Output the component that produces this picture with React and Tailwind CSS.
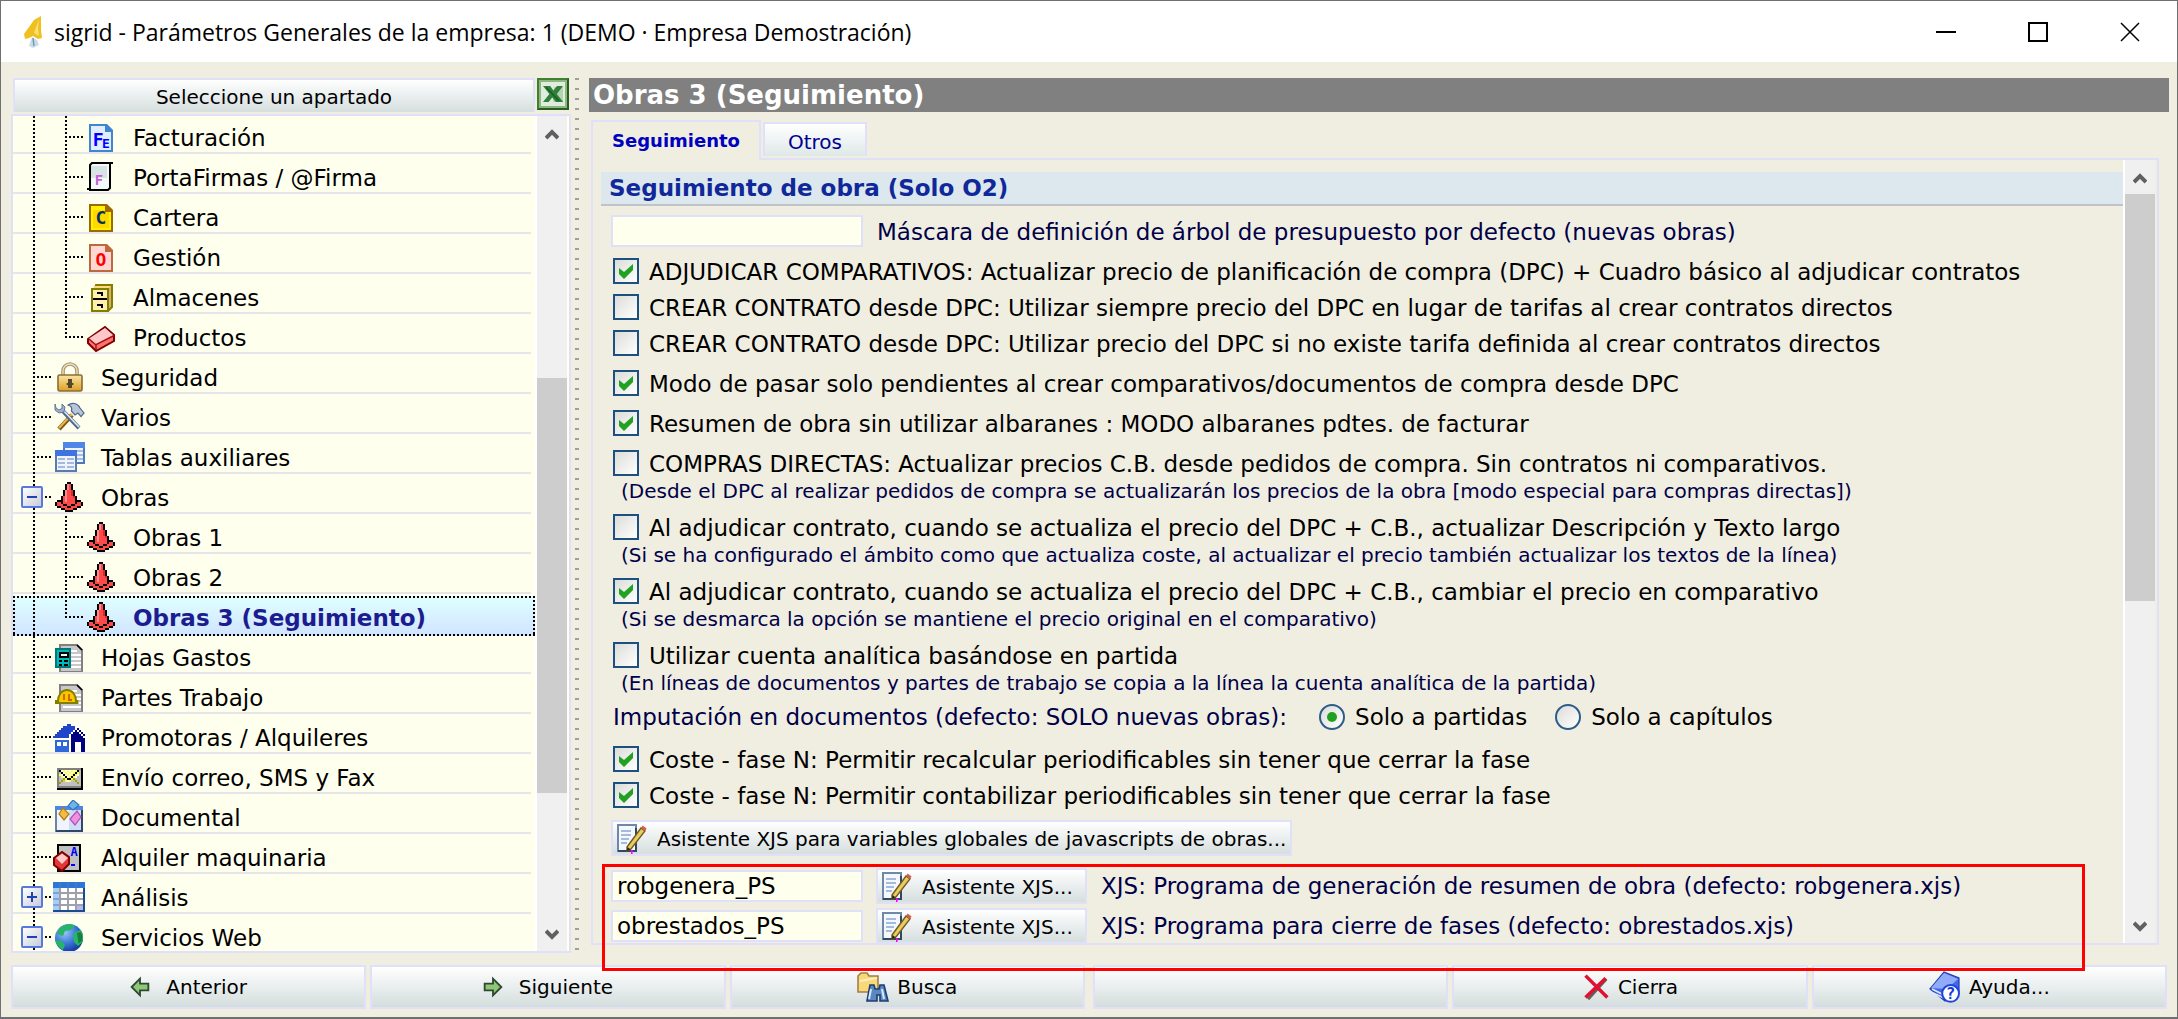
import { useState } from "react";

// Draws a small bitmap icon: one character per pixel, "." is transparent
function PixelIcon({ rows, colors }) {
  return (
    <svg viewBox="0 0 16 16" className="size-8 shrink-0" shapeRendering="crispEdges">
      {rows.map((row, y) =>
        row.split("").map((c, x) =>
          colors[c] ? (
            <rect key={`${x}-${y}`} x={x} y={y} width="1" height="1" fill={colors[c]} />
          ) : null
        )
      )}
    </svg>
  );
}

function Icon({ children, className = "size-8" }) {
  return (
    <svg viewBox="0 0 16 16" className={`shrink-0 ${className}`}>
      {children}
    </svg>
  );
}

const letter = { fontFamily: "DejaVu Sans Mono", fontWeight: 700, textAnchor: "middle" };

function DocIcon({ stroke, fill, inner, children }) {
  return (
    <Icon>
      <path d="M2.5 2.5h8l3 3v10h-11z" fill={fill} stroke={stroke} />
      <path d="M4 5h8v9H4z" fill={inner} />
      <path d="M10 2h1l3 3v1h-4z" fill={stroke} />
      {children}
    </Icon>
  );
}

function FacturacionIcon() {
  return (
    <DocIcon stroke="#3f86cf" fill="#e0ecff" inner="#e0ecff">
      <text x="6.6" y="13" fontSize="9" fill="#0000ff" style={letter}>F</text>
      <text x="10.4" y="14" fontSize="6.5" fill="#0000ff" style={letter}>E</text>
    </DocIcon>
  );
}

function FirmaIcon() {
  return (
    <Icon>
      <path d="M2.5 2.500l1-1h9v12.500l-1 1h-9z" fill="#f4fafa" stroke="#000" />
      <path d="M3 3h8v6H3z" fill="#d8e4e4" />
      <path d="M12 1h2v1h-2zM1 14h2v1H1z" fill="#000" />
      <text x="7" y="12.6" fontSize="7" fill="#c65fd8" style={letter}>F</text>
    </Icon>
  );
}

function CarteraIcon() {
  return (
    <DocIcon stroke="#a06800" fill="#fff200" inner="#ffd800">
      <text x="8" y="12.2" fontSize="9" fill="#003060" style={letter}>C</text>
    </DocIcon>
  );
}

function GestionIcon() {
  return (
    <DocIcon stroke="#bc6a3c" fill="#ffd8d4" inner="#ffd8d4">
      <text x="8" y="13" fontSize="9" fill="#ff0000" style={letter}>O</text>
    </DocIcon>
  );
}

function AlmacenesIcon() {
  return (
    <Icon>
      <path d="M5.5 2.5h8v11l-2 2V4.500H5z" fill="#d8b070" stroke="#808000" />
      <path d="M5 3h8l-1 1H4z" fill="#ffd880" />
      <path d="M3.500 4.500h8v11h-8z" fill="#fff0b0" stroke="#808000" />
      <path d="M4 9h7v1H4zM6 6h3v2H8V7H6zM6 12h3v2H8v-1H6z" fill="#000" />
    </Icon>
  );
}

function ProductosIcon() {
  return (
    <Icon>
      <path d="M1.500 9.500L10 3.500l4.500 4v3L5.500 15.500l-4-4z" fill="#ff7070" stroke="#800000" />
      <path d="M2 9.300L10 4l4 3.500-8.500 4.500z" fill="#ffc8c8" />
      <path d="M2 9.500l3.500 3v2.500M5.500 12.300l9-4.500" fill="none" stroke="#a01010" strokeWidth=".7" />
    </Icon>
  );
}

function SeguridadIcon() {
  return (
    <Icon>
      <defs>
        <linearGradient id="lock" x1="0" y1="0" x2="0" y2="1">
          <stop offset="0" stopColor="#fbe6a4" />
          <stop offset="1" stopColor="#dba024" />
        </linearGradient>
      </defs>
      <path d="M5 8V5.500a3.500 3.500 0 0 1 7 0V8" fill="none" stroke="#a89468" strokeWidth="1.800" />
      <path d="M5 8V5.500a3.500 3.500 0 0 1 7 0V8" fill="none" stroke="#ece0c4" strokeWidth=".7" />
      <rect x="2.500" y="7.500" width="12" height="8" rx=".8" fill="url(#lock)" stroke="#8c6c34" strokeWidth=".8" />
      <path d="M7.500 9.500h2v2h.7v1h-.7v1.500h-2v-1.500h-.700v-1h.7z" fill="#54482c" />
    </Icon>
  );
}

function VariosIcon() {
  return (
    <Icon>
      <path d="M9.500 7.500L3 14.500" stroke="#7a5820" strokeWidth="2.200" />
      <path d="M9.500 7L3 14" stroke="#f0b840" strokeWidth="1" />
      <path d="M4 4.500l9 9.500" stroke="#50688c" strokeWidth="2" />
      <path d="M4.500 4.500l8.500 9" stroke="#dce4f0" strokeWidth=".9" />
      <path d="M1 2v3l2 1.500 2.500-.5.500-2.500L4.500 2v2.200L3 5 1.500 4z" fill="#a0b0c8" stroke="#60789c" strokeWidth=".5" />
      <path d="M7.500 2.500c2-1.500 5-1 6 1.500l2 2.500-1.500 1.800-1.500-1.800-1.500 1-1.800-2c.5-1.500-.200-2.500-1.700-3z" fill="#b8c4d8" stroke="#50688c" strokeWidth=".6" />
    </Icon>
  );
}

function TablasIcon() {
  return (
    <Icon>
      <rect x="5.500" y="1.500" width="10" height="10" fill="#eef4ff" stroke="#5078c0" />
      <rect x="5" y="1" width="11" height="3" fill="#4f86e8" />
      <path d="M12 5.500h3M12 7.500h3M12 9.500h3" stroke="#a8bce0" />
      <rect x="1.500" y="5.500" width="10" height="10" fill="#eef4ff" stroke="#5a7cac" />
      <rect x="1" y="5" width="11" height="3" fill="#3f74e0" />
      <path d="M2.500 9.500h3.500M7 9.500h3.500M2.500 11.500h3.500M7 11.500h3.500M2.500 13.500h3.500M7 13.500h3.500" stroke="#a8b8d8" />
    </Icon>
  );
}

function ConoIcon() {
  return (
    <PixelIcon
      colors={{ K: "#000", R: "#ff4848", P: "#ff8c8c", D: "#e02828" }}
      rows={[
        "................",
        ".......KK.......",
        "......KPRK......",
        "......KPRK......",
        "......KPRK......",
        ".....KPRRDK.....",
        ".....KPRRDK.....",
        ".....KPRRDK.....",
        "....KRPRRRDK....",
        "....KRPRRRRK....",
        "..KKKRPRRRRKKK..",
        ".KRRKRRRRRRKRRK.",
        ".KRRRKKRRKKRRRK.",
        "..KKRRRKKRRRKK..",
        "....KKRRRRKK....",
        "......KKKK......",
      ]}
    />
  );
}

function PageBase() {
  return (
    <>
      <path d="M3.500 2.500h8.500l2.500 2.500v11h-11z" fill="#c8c8c8" stroke="#808080" />
      <path d="M12 2.500l2.500 2.500" fill="none" stroke="#000" strokeWidth=".8" />
      <path d="M5 5.500h7M5 7.500h9M5 9.500h9M5 11.500h9M5 13.500h9" stroke="#fff" />
    </>
  );
}

function HojasIcon() {
  return (
    <Icon>
      <PageBase />
      <rect x="1.500" y="4.500" width="7" height="9" fill="#00b8b8" stroke="#007878" />
      <rect x="3.500" y="6.500" width="4" height="2" fill="#e0ffff" stroke="#000" />
      <path d="M3 10h1.500v1H3zM5.500 10h2v1h-2zM3 12h1.500v1H3zM5.500 12h2v1h-2z" fill="#000" />
    </Icon>
  );
}

function PartesIcon() {
  return (
    <Icon>
      <PageBase />
      <path d="M1.500 11.500v-1h1c0-3 1.800-5.500 4.500-5.500s4.500 2.500 4.500 5.500h.7v1z" fill="#ffc400" stroke="#808000" />
      <path d="M5.500 7v3M8 7v3h1.500" fill="none" stroke="#c06800" strokeWidth=".9" />
    </Icon>
  );
}

function CasaIcon() {
  return (
    <PixelIcon
      colors={{ B: "#1f46c8", N: "#000080", C: "#2f66dc", W: "#fff" }}
      rows={[
        "................",
        "................",
        ".......BB.......",
        ".....BBBBBB.....",
        "....BBBBBBBWN...",
        "...BBBBBBBWNWN..",
        "..BBBBBBBWNNNWN.",
        ".BBBBBBBWNNNNNWN",
        "BBBBBBBB.NNNNNN.",
        ".........NNNNNNN",
        ".CCCCCCC.NNNNNNN",
        ".CWWCWWC.NNWWWNN",
        ".CWWCWWC.NNWWWNN",
        ".CCCCCCC.NNWWWNN",
        ".CCCCCCC.NNWWWNN",
        ".CCCCCCC.NNWWWNN",
      ]}
    />
  );
}

function CorreoIcon() {
  return (
    <PixelIcon
      colors={{ G: "#808080", K: "#000", W: "#fff", Y: "#ffff40", S: "#c0c0c0", O: "#a0a000" }}
      rows={[
        "................",
        "................",
        "................",
        "................",
        "..GGGGGGGGGGGGK.",
        "..GKWYWYWYWYKSK.",
        "..GSKWYWYWYKYSK.",
        "..GYWKWYWYKYWSK.",
        "..GSYWKWYKYWSSK.",
        "..GSSOYKKYOSSSK.",
        "..GSOSYWYSSOSSK.",
        "..GOSSSSSSSSOSK.",
        "..GSSSSSSSSSSSK.",
        "..GGGGGGGGGGGGK.",
        "..KKKKKKKKKKKKK.",
      ]}
    />
  );
}

function DocumentalIcon() {
  return (
    <Icon>
      <rect x="1.500" y="3.500" width="13" height="12" fill="#f0f4ff" stroke="#6c84a8" />
      <rect x="1" y="3" width="14" height="2" fill="#4f86e0" />
      <path d="M8 5h6v10H8z" fill="#cfdcf8" />
      <path d="M1.500 15.500h13V5" fill="none" stroke="#304868" />
      <path d="M10 0l3 2.500L10 5 7.500 3z" fill="#70b4e8" stroke="#3878b8" strokeWidth=".6" />
      <path d="M5 4l3 3-2.500 3L3 7z" fill="#f4bc40" stroke="#b07c18" strokeWidth=".6" />
      <path d="M12 5.500l2 3-3 4-2.500-3z" fill="#f090e0" stroke="#b050b0" strokeWidth=".6" />
    </Icon>
  );
}

function AlquilerIcon() {
  return (
    <Icon>
      <rect x="2.500" y="2.500" width="11" height="13" fill="#c0c0c0" stroke="#000" />
      <text x="10.5" y="8" fontSize="6" fill="#0000ff" style={letter}>A</text>
      <path d="M9 12h2v1H9z" fill="#0000ff" />
      <path d="M.500 9L4.500 6l3.500 2.500v3.500L4.500 15.500l-4-3z" fill="#e03838" stroke="#800000" />
      <path d="M1.500 9L4.500 6.800l3 2.200-3 3z" fill="#ffc8c8" />
    </Icon>
  );
}

function AnalisisIcon() {
  return (
    <Icon>
      <rect x=".5" y="1.500" width="15" height="14" fill="#a0a0a8" stroke="#1c4c90" />
      <rect x="0" y="1" width="16" height="3" fill="#2f74d8" />
      <rect x="0" y="4" width="3" height="11" fill="#a8ccf8" />
      <path d="M4 4h3v2H4zM8 4h3v2H8zM12 4h3v2h-3zM4 7h3v2H4zM8 7h3v2H8zM12 7h3v2h-3zM4 10h3v2H4zM8 10h3v2H8zM12 10h3v2h-3zM4 13h3v2H4zM8 13h3v2H8z" fill="#fff" />
      <path d="M12 13h3v2h-3z" fill="#b8b8f0" />
      <path d="M0 6.500h3M0 9.500h3M0 12.500h3M3.500 1v3M7.500 1v3M11.500 1v3" stroke="#4f7cb8" strokeWidth=".6" />
    </Icon>
  );
}

function WebIcon() {
  return (
    <Icon>
      <defs>
        <radialGradient id="globe" cx=".35" cy=".3" r=".8">
          <stop offset="0" stopColor="#9cc8f4" />
          <stop offset=".5" stopColor="#3c78d8" />
          <stop offset="1" stopColor="#0c2c90" />
        </radialGradient>
      </defs>
      <circle cx="8" cy="9" r="7" fill="url(#globe)" />
      <path d="M3 4.500C5 2 9 1.500 11 3L9 5 6 5.500 5 8 2 7zM1.200 10l3.300.5 1.500 2-1 2.500C3 14 1.500 12 1.200 10zM11 6l3-1c1 2 1.300 4 .8 6L12.500 13 10.500 11l-.5-3z" fill="#28b468" />
      <path d="M12 6.500l2-.5c.6 1.500.8 3 .5 4.500l-1.700 1.200z" fill="#188038" />
    </Icon>
  );
}

function ExcelIcon() {
  return (
    <Icon>
      <rect width="16" height="16" fill="#3f7f30" />
      <path d="M16 0v16H0z" fill="#285c20" />
      <rect x="1.500" y="1.500" width="13" height="13" fill="#e0ece0" stroke="#8cb880" />
      <path d="M8.500 4.500H13v7.500H8z" fill="#b4d4b0" />
      <path d="M3 4h3.600l1.600 2.200L10 4h3L9.900 8l3.200 4H9.400L7.600 9.800 5.800 12H3l3.200-4z" fill="#2f8038" />
      <path d="M4.500 4.600l6.500 6.800" stroke="#1c5c28" strokeWidth=".8" />
    </Icon>
  );
}

function NotaIcon() {
  return (
    <Icon>
      <rect x="1.500" y="1.500" width="9" height="13" fill="#f4f8fc" stroke="#7088a8" />
      <path d="M10.500 3v11.500H1.500" fill="none" stroke="#304868" />
      <path d="M3 4.500h5M3 6.500h5M3 8.500h4M3 10.500h3" stroke="#88a8d0" strokeWidth=".8" />
      <path d="M6 12.500L13 3l2 1.500-7 9-2 1z" fill="#e8cc60" stroke="#705820" strokeWidth=".7" />
      <path d="M13 3l.8-1.200 2 1.500L15 4.500z" fill="#d06050" />
      <path d="M5.800 14.500l.5-2 1.500 1.200z" fill="#302810" />
      <path d="M8 14h.8v2H8z" fill="#ff00ff" />
    </Icon>
  );
}

function FlechaIcon({ right }) {
  return (
    <svg viewBox="0 0 12 12" className={`mr-2 h-6 w-5 shrink-0 ${right ? "rotate-180" : ""}`}>
      <path d="M1 6l5-5v3h5v4H6v3z" fill="#8cc878" stroke="#304830" strokeWidth="1.100" />
    </svg>
  );
}

function BuscaIcon() {
  return (
    <Icon>
      <path d="M.500 2.500L2 1h3l1 1.500h4.500v8h-10z" fill="#f8d878" stroke="#a08048" strokeWidth=".8" />
      <path d="M1.500 5L10 3.500" stroke="#fff0c0" />
      <path d="M6.500 7h2l.5 2h2l.5-2h2l2 8h-4v-3h-1.500v3H5z" fill="#5c88c0" stroke="#1c3c74" strokeWidth=".8" />
      <path d="M7 9l-1 5M12.500 9l1 5" stroke="#d8e8fc" />
    </Icon>
  );
}

function CierraIcon() {
  return (
    <Icon className="size-7">
      <path d="M3.500 15L14 3.500" stroke="#606060" strokeWidth="1.500" />
      <path d="M2 1.500L14.500 14M2 14L13.500 3" stroke="#e01030" strokeWidth="2" />
    </Icon>
  );
}

function AyudaIcon() {
  return (
    <Icon>
      <path d="M.500 9L7.500.500l7.500 3v7L8 15z" fill="#4468e8" stroke="#2040b0" strokeWidth=".6" />
      <path d="M1 8.500L7.500 1l7 3L9 9z" fill="#90acf8" />
      <path d="M1 10.500l6.500 3M1.500 9l6 3" stroke="#e0e8ff" strokeWidth=".8" />
      <circle cx="10.800" cy="11.200" r="4.200" fill="#fff" stroke="#1c44e0" />
      <text x="10.8" y="14" fontSize="8" fill="#1838d8" style={letter}>?</text>
    </Icon>
  );
}

const secciones = [
  { label: "Facturación", level: 2, icon: FacturacionIcon },
  { label: "PortaFirmas / @Firma", level: 2, icon: FirmaIcon },
  { label: "Cartera", level: 2, icon: CarteraIcon },
  { label: "Gestión", level: 2, icon: GestionIcon },
  { label: "Almacenes", level: 2, icon: AlmacenesIcon },
  { label: "Productos", level: 2, icon: ProductosIcon, last: true },
  { label: "Seguridad", level: 1, icon: SeguridadIcon },
  { label: "Varios", level: 1, icon: VariosIcon },
  { label: "Tablas auxiliares", level: 1, icon: TablasIcon },
  { label: "Obras", level: 1, icon: ConoIcon, toggle: "-" },
  { label: "Obras 1", level: 2, icon: ConoIcon },
  { label: "Obras 2", level: 2, icon: ConoIcon },
  { label: "Obras 3 (Seguimiento)", level: 2, icon: ConoIcon, last: true },
  { label: "Hojas Gastos", level: 1, icon: HojasIcon },
  { label: "Partes Trabajo", level: 1, icon: PartesIcon },
  { label: "Promotoras / Alquileres", level: 1, icon: CasaIcon },
  { label: "Envío correo, SMS y Fax", level: 1, icon: CorreoIcon },
  { label: "Documental", level: 1, icon: DocumentalIcon },
  { label: "Alquiler maquinaria", level: 1, icon: AlquilerIcon },
  { label: "Análisis", level: 1, icon: AnalisisIcon, toggle: "+" },
  { label: "Servicios Web", level: 1, icon: WebIcon, toggle: "-" },
];

const DOTS_Y = "bg-[repeating-linear-gradient(to_bottom,#000_0_2px,transparent_2px_4px)]";
const DOTS_X = "bg-[repeating-linear-gradient(to_right,#000_0_2px,transparent_2px_4px)]";

function TreeRow({ item, selected, onSelect }) {
  const ItemIcon = item.icon;
  const nested = item.level === 2;

  return (
    <li className={`relative h-10 ${selected ? "bg-linear-to-b from-[#e0ffff] to-[#d0e4ff]" : ""}`}>
      {selected ? (
        <>
          <span className={`absolute inset-x-0 top-0 h-0.5 ${DOTS_X}`} />
          <span className={`absolute inset-x-0 bottom-0 h-0.5 ${DOTS_X}`} />
          <span className={`absolute inset-y-0 left-0 w-0.5 ${DOTS_Y}`} />
          <span className={`absolute inset-y-0 right-0 w-0.5 ${DOTS_Y}`} />
        </>
      ) : (
        <span className="absolute bottom-0.5 left-0 right-1 h-0.5 bg-[#e6e6ea]" />
      )}
      <span className={`absolute inset-y-0 left-5 w-0.5 ${DOTS_Y}`} />
      {nested && (
        <span className={`absolute top-0 left-[52px] w-0.5 ${DOTS_Y} ${item.last ? "h-5" : "h-full"}`} />
      )}
      <span className={`absolute top-5 h-0.5 w-5 ${DOTS_X} ${nested ? "left-[52px]" : "left-5"}`} />
      {item.toggle && (
        <button
          type="button"
          aria-label={item.label}
          className="absolute left-2 top-[10px] flex size-[22px] items-center justify-center rounded-xs border-2 border-[#5878e0] bg-linear-to-br from-white to-[#c8ccd8]"
        >
          <svg viewBox="0 0 10 10" className="size-[10px]">
            <path d={item.toggle === "+" ? "M0 5h10M5 0v10" : "M0 5h10"} stroke="#2040b0" strokeWidth="2" />
          </svg>
        </button>
      )}
      <button
        type="button"
        onClick={onSelect}
        className={`relative flex h-full items-center gap-4 ${nested ? "ml-[72px]" : "ml-10"} ${
          selected ? "font-bold text-[#1c1c90]" : "text-black"
        }`}
      >
        <ItemIcon />
        <span className="pt-1 whitespace-nowrap">{item.label}</span>
      </button>
    </li>
  );
}

function ScrollBar({ thumb }) {
  return (
    <div className="flex w-[30px] shrink-0 flex-col items-center bg-[#f0f0f0]">
      <svg viewBox="0 0 14 12" className="mt-3 h-3 w-[14px] shrink-0">
        <path d="M1 10l6-6 6 6" fill="none" stroke="#606060" strokeWidth="4" />
      </svg>
      <div className="my-[10px] w-full flex-1">{thumb}</div>
      <svg viewBox="0 0 14 12" className="mb-[10px] h-3 w-[14px] shrink-0">
        <path d="M1 2l6 6 6-6" fill="none" stroke="#606060" strokeWidth="4" />
      </svg>
    </div>
  );
}

function Check({ label, note, defaultChecked }) {
  return (
    <div>
      <label className="flex h-9 items-center gap-[10px] whitespace-nowrap text-black">
        <span className="relative size-[26px] shrink-0">
          <input
            type="checkbox"
            defaultChecked={defaultChecked}
            className="peer block size-[26px] appearance-none border-2 border-[#1c5080] bg-linear-to-br from-[#dcdcd8] to-white"
          />
          <svg
            viewBox="0 0 26 26"
            className="pointer-events-none absolute inset-0 hidden size-[26px] peer-checked:block"
          >
            <path d="M6 10v6l5 5 9-9V6l-9 8z" fill="#21a121" />
          </svg>
        </span>
        <span className="pt-0.5">{label}</span>
      </label>
      {note && <p className="ml-2 h-6 text-[20px] leading-5 whitespace-nowrap text-[#000048]">{note}</p>}
    </div>
  );
}

function Radio({ label, defaultChecked }) {
  return (
    <label className="flex items-center gap-[10px] whitespace-nowrap text-black">
      <span className="relative size-[26px] shrink-0">
        <input
          type="radio"
          name="imputacion"
          defaultChecked={defaultChecked}
          className="peer block size-[26px] appearance-none rounded-full border-2 border-[#2c5c88] bg-linear-to-br from-[#dcdcd8] to-white"
        />
        <span className="pointer-events-none absolute inset-2 hidden rounded-full bg-[#21a121] peer-checked:block" />
      </span>
      <span>{label}</span>
    </label>
  );
}

function ToolButton({ children, className = "" }) {
  return (
    <button
      type="button"
      className={`flex h-9 items-center gap-[10px] border-2 border-[#e0e0f8] bg-linear-to-b from-white to-[#d6dede] pr-1 pl-0.5 text-[20px] whitespace-nowrap text-black ${className}`}
    >
      <NotaIcon />
      <span className="pt-0.5">{children}</span>
    </button>
  );
}

function XjsRow({ id, value, label }) {
  return (
    <div className="flex h-9 items-center">
      <input
        id={id}
        defaultValue={value}
        className="h-8 w-[252px] border-2 border-[#e0e0f8] bg-[#ffffee] px-1 text-black"
      />
      <ToolButton className="ml-[13px] w-[211px]">Asistente XJS...</ToolButton>
      <label htmlFor={id} className="ml-[14px] whitespace-nowrap">
        {label}
      </label>
    </div>
  );
}

function FooterButton({ icon, children }) {
  return (
    <button
      type="button"
      className="flex h-11 items-center justify-center gap-2 border-2 border-[#e0e0f8] bg-linear-to-b from-white to-[#d4dddd] text-[20px] text-black"
    >
      {icon}
      {children && <span>{children}</span>}
    </button>
  );
}

function App() {
  const [selected, setSelected] = useState("Obras 3 (Seguimiento)");

  return (
    <div className="flex h-screen flex-col overflow-hidden border border-b-2 border-[#707070] bg-[#f0eee1] font-['DejaVu_Sans',sans-serif] text-[23px] leading-7 text-[#000048]">
      <header className="flex h-[61px] shrink-0 items-center bg-white pl-[22px] text-black">
        <svg viewBox="0 0 20 32" className="h-8 w-5">
          <path d="M18 0L11 4 1 18l1 5 4-1 4-2 5 3 4-1-1-8z" fill="#f0c020" />
          <path d="M16 3l-5 14 5 3-1-8z" fill="#fae070" />
          <path d="M9 21l-3 9 4 2 6-3-2-5z" fill="#c8dce8" />
          <path d="M10 22l1 8" stroke="#7c98b0" strokeWidth="1.500" />
        </svg>
        <h1 className="ml-[11px] flex-1 font-['Open_Sans',sans-serif] text-[23px]">
          sigrid - Parámetros Generales de la empresa: 1 (DEMO · Empresa Demostración)
        </h1>
        <div className="flex gap-[72px] pr-[37px]">
          <button type="button" aria-label="Minimizar">
            <svg viewBox="0 0 20 20" className="size-5">
              <path d="M0 10h20" stroke="#000" strokeWidth="2" />
            </svg>
          </button>
          <button type="button" aria-label="Maximizar">
            <svg viewBox="0 0 20 20" className="size-5">
              <path d="M1 1h18v18H1z" fill="none" stroke="#000" strokeWidth="2" />
            </svg>
          </button>
          <button type="button" aria-label="Cerrar">
            <svg viewBox="0 0 20 20" className="size-5">
              <path d="M1 1l18 18M19 1L1 19" stroke="#000" strokeWidth="1.500" />
            </svg>
          </button>
        </div>
      </header>

      <main className="flex min-h-0 flex-1 pt-4 pr-2 pl-[10px]">
        <aside className="flex w-[560px] shrink-0 flex-col">
          <div className="flex h-[34px] shrink-0 justify-between pr-0.5 pl-0.5">
            <button
              type="button"
              className="w-[522px] border-2 border-b-0 border-[#e0e0f8] bg-linear-to-b from-white to-[#d6dede] pt-0.5 text-[20px] text-black"
            >
              Seleccione un apartado
            </button>
            <button type="button" aria-label="Excel" className="self-start">
              <ExcelIcon />
            </button>
          </div>
          <div className="mt-0.5 flex min-h-0 flex-1 border-2 border-[#e0e0f8] bg-[#ffffee]">
            <ul className="min-w-0 flex-1 overflow-hidden">
              {secciones.map((item) => (
                <TreeRow
                  key={item.label}
                  item={item}
                  selected={item.label === selected}
                  onSelect={() => setSelected(item.label)}
                />
              ))}
            </ul>
            <div className="flex border-l-2 border-white pr-0.5">
              <ScrollBar
                thumb={
                  <div className="flex h-full flex-col">
                    <div className="flex-[228]" />
                    <div className="flex-[414] bg-[#cdcdcd]" />
                    <div className="flex-[126]" />
                  </div>
                }
              />
            </div>
          </div>
        </aside>

        <div className="mr-[10px] ml-1 w-1 shrink-0 bg-[repeating-linear-gradient(to_bottom,#a0a098_0_2px,transparent_2px_10px)]" />

        <section className="relative flex min-w-0 flex-1 flex-col pb-2">
          <h2 className="h-[34px] shrink-0 bg-[#808080] pl-1 text-[26px] leading-[34px] font-bold text-white">
            Obras 3 (Seguimiento)
          </h2>

          <div className="relative z-10 mt-2 ml-0.5 flex h-10 shrink-0 items-start">
            <button
              type="button"
              className="h-10 w-[170px] border-2 border-b-0 border-[#e0e0f8] bg-[#f0eee1] text-[18px] font-bold text-[#0000c0]"
            >
              Seguimiento
            </button>
            <button
              type="button"
              className="mt-[2px] ml-0.5 h-[34px] w-[104px] border-2 border-b-0 border-[#e0e0f8] bg-linear-to-b from-white to-[#dfe8e8] pt-1 text-[20px] text-[#000090]"
            >
              Otros
            </button>
          </div>

          <div className="-mt-0.5 mr-[10px] ml-0.5 flex min-h-0 flex-1 border-2 border-[#e0e0f8]">
            <form className="min-w-0 flex-1 overflow-hidden pt-3 pl-2">
              <h3 className="h-[34px] border-b-2 border-[#c0c4c8] bg-[#dce8ee] pl-2 leading-8 font-bold text-[#10289a]">
                Seguimiento de obra (Solo O2)
              </h3>
              <div className="flex flex-col gap-1 pt-[7px] pl-[10px]">
                <div className="flex h-9 items-center">
                  <input
                    id="mascara"
                    className="h-8 w-[252px] border-2 border-[#e0e0f8] bg-[#ffffee] px-1 text-black"
                  />
                  <label htmlFor="mascara" className="ml-[14px] pt-0.5 whitespace-nowrap">
                    Máscara de definición de árbol de presupuesto por defecto (nuevas obras)
                  </label>
                </div>

                <div className="pl-0.5">
                  <Check
                    label="ADJUDICAR COMPARATIVOS: Actualizar precio de planificación de compra (DPC) + Cuadro básico al adjudicar contratos"
                    defaultChecked
                  />
                  <Check label="CREAR CONTRATO desde DPC: Utilizar siempre precio del DPC en lugar de tarifas al crear contratos directos" />
                  <Check label="CREAR CONTRATO desde DPC: Utilizar precio del DPC si no existe tarifa definida al crear contratos directos" />
                </div>
                <div className="flex flex-col gap-1 pl-0.5">
                  <Check
                    label="Modo de pasar solo pendientes al crear comparativos/documentos de compra desde DPC"
                    defaultChecked
                  />
                  <Check
                    label="Resumen de obra sin utilizar albaranes : MODO albaranes pdtes. de facturar"
                    defaultChecked
                  />
                  <Check
                    label="COMPRAS DIRECTAS: Actualizar precios C.B. desde pedidos de compra. Sin contratos ni comparativos."
                    note="(Desde el DPC al realizar pedidos de compra se actualizarán los precios de la obra [modo especial para compras directas])"
                  />
                  <Check
                    label="Al adjudicar contrato, cuando se actualiza el precio del DPC + C.B., actualizar Descripción y Texto largo"
                    note="(Si se ha configurado el ámbito como que actualiza coste, al actualizar el precio también actualizar los textos de la línea)"
                  />
                  <Check
                    label="Al adjudicar contrato, cuando se actualiza el precio del DPC + C.B., cambiar el precio en comparativo"
                    note="(Si se desmarca la opción se mantiene el precio original en el comparativo)"
                    defaultChecked
                  />
                  <Check
                    label="Utilizar cuenta analítica basándose en partida"
                    note="(En líneas de documentos y partes de trabajo se copia a la línea la cuenta analítica de la partida)"
                  />
                </div>

                <fieldset className="flex h-9 items-center pt-0.5 pl-0.5">
                  <legend className="float-left mr-8 whitespace-nowrap">
                    Imputación en documentos (defecto: SOLO nuevas obras):
                  </legend>
                  <div className="flex gap-7">
                    <Radio label="Solo a partidas" defaultChecked />
                    <Radio label="Solo a capítulos" />
                  </div>
                </fieldset>

                <div className="pl-0.5">
                  <Check
                    label="Coste - fase N: Permitir recalcular periodificables sin tener que cerrar la fase"
                    defaultChecked
                  />
                  <Check
                    label="Coste - fase N: Permitir contabilizar periodificables sin tener que cerrar la fase"
                    defaultChecked
                  />
                </div>

                <div className="flex pt-[3px] pb-2">
                  <ToolButton>Asistente XJS para variables globales de javascripts de obras...</ToolButton>
                </div>

                <XjsRow
                  id="robgenera"
                  value="robgenera_PS"
                  label="XJS: Programa de generación de resumen de obra (defecto: robgenera.xjs)"
                />
                <XjsRow
                  id="obrestados"
                  value="obrestados_PS"
                  label="XJS: Programa para cierre de fases (defecto: obrestados.xjs)"
                />
              </div>
            </form>
            <div className="flex border-l-2 border-white pr-0.5">
              <ScrollBar
                thumb={
                  <div className="flex h-full flex-col">
                    <div className="flex-[406] bg-[#cdcdcd]" />
                    <div className="flex-[310]" />
                  </div>
                }
              />
            </div>
          </div>

          {/* highlighted XJS programs */}
          <div className="pointer-events-none absolute right-[84px] -bottom-[18px] left-[13px] z-20 h-[107px] border-3 border-[#ff0000]" />
        </section>
      </main>

      <footer className="grid shrink-0 grid-cols-2 gap-2 pt-3 pr-[10px] pb-2 pl-[10px]">
        <div className="grid grid-cols-3 gap-1">
          <FooterButton icon={<FlechaIcon />}>Anterior</FooterButton>
          <FooterButton icon={<FlechaIcon right />}>Siguiente</FooterButton>
          <FooterButton icon={<BuscaIcon />}>Busca</FooterButton>
        </div>
        <div className="grid grid-cols-3 gap-1">
          <FooterButton />
          <FooterButton icon={<CierraIcon />}>Cierra</FooterButton>
          <FooterButton icon={<AyudaIcon />}>Ayuda...</FooterButton>
        </div>
      </footer>
    </div>
  );
}

export default App;
